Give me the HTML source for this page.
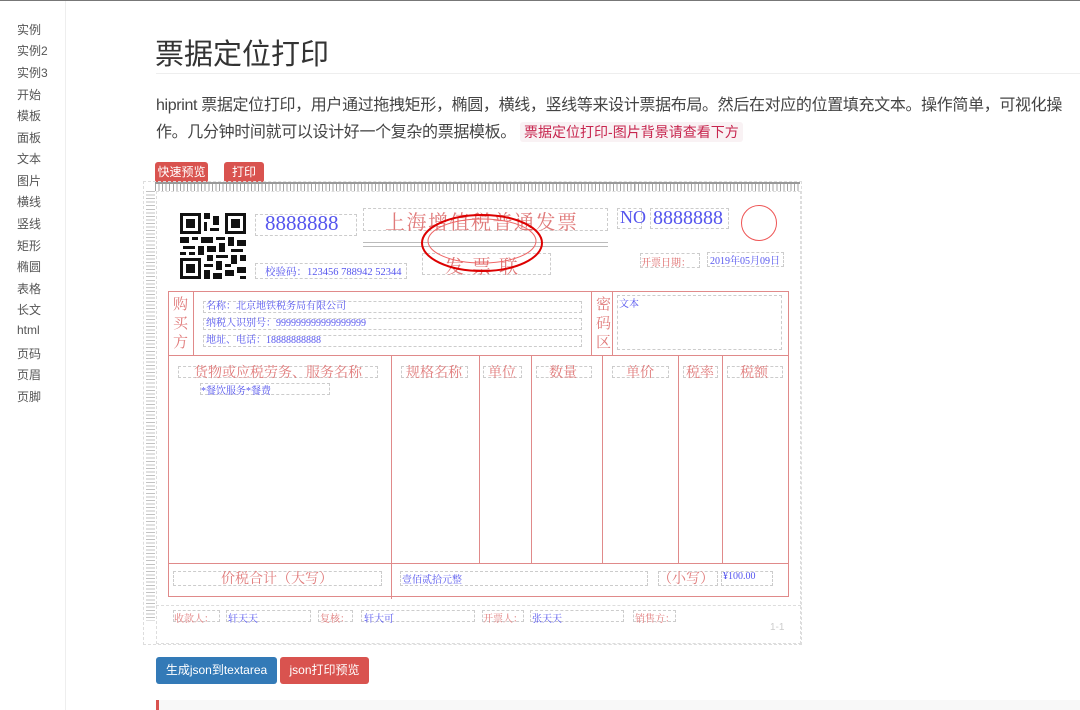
<!DOCTYPE html>
<html><head><meta charset="utf-8">
<style>
*{margin:0;padding:0;box-sizing:border-box}
body{width:1080px;height:709px;overflow:hidden;background:#fff;font-family:"Liberation Sans","Noto Sans CJK SC",sans-serif;position:relative;border-top:1px solid #777}
.a{position:absolute;white-space:nowrap}
.side{position:absolute;left:0;top:0;width:66px;height:709px;border-right:1px solid #eee}
.side div{position:absolute;left:17px;font-size:12px;color:#555}
.d{position:absolute;border:1px dashed #ccc}
.s{font-family:"Liberation Serif","Noto Serif CJK SC",serif}
.ln{position:absolute;background:#e08a8a}
</style></head><body>
<div class="side">
<div style="top:20px">实例</div><div style="top:41px">实例2</div><div style="top:63px">实例3</div><div style="top:85px">开始</div><div style="top:106px">模板</div><div style="top:128px">面板</div><div style="top:149px">文本</div><div style="top:171px">图片</div><div style="top:192px">横线</div><div style="top:214px">竖线</div><div style="top:236px">矩形</div><div style="top:257px">椭圆</div><div style="top:279px">表格</div><div style="top:300px">长文</div><div style="top:322px">html</div><div style="top:344px">页码</div><div style="top:365px">页眉</div><div style="top:387px">页脚</div>
</div>
<div class="a" style="left:155px;top:30px;font-size:29px;color:#333">票据定位打印</div>
<div class="a" style="left:156px;top:72px;width:924px;height:1px;background:#eee"></div>
<div class="a" style="left:156px;top:91px;font-size:16px;color:#444;line-height:27px;letter-spacing:-0.35px">hiprint 票据定位打印，用户通过拖拽矩形，椭圆，横线，竖线等来设计票据布局。然后在对应的位置填充文本。操作简单，可视化操<br>作。几分钟时间就可以设计好一个复杂的票据模板。 <span style="font-size:14px;color:#c7254e;background:#f9f2f4;padding:2px 4px;border-radius:3px;letter-spacing:0">票据定位打印-图片背景请查看下方</span></div>
<div class="a" style="left:155px;top:161px;width:53px;height:21px;background:#d9534f;border-radius:3px;color:#fff;font-size:12px;line-height:21px;text-align:center">快速预览</div>
<div class="a" style="left:224px;top:161px;width:40px;height:21px;background:#d9534f;border-radius:3px;color:#fff;font-size:12px;line-height:21px;text-align:center">打印</div>
<!-- paper -->
<div class="d" style="left:143px;top:180px;width:659px;height:464px;border-color:#ddd"></div>
<div class="a" style="left:155px;top:181px;width:645px;height:9px;background:repeating-linear-gradient(90deg,#666 0 1px,transparent 1px 3.55px);opacity:.6"></div>
<div class="a" style="left:155px;top:181px;width:645px;height:2px;background:#999"></div>
<div class="a" style="left:146px;top:190px;width:9px;height:430px;background:repeating-linear-gradient(180deg,#777 0 1px,transparent 1px 3.55px);opacity:.45"></div>
<div class="d" style="left:156px;top:190px;width:645px;height:453px;border-color:#ddd"></div>
<!-- QR -->
<svg class="a" style="left:180px;top:212px" width="66" height="66" viewBox="0 0 22 22">
<rect width="22" height="22" fill="#fff"/>
<g fill="#111"><path d="M0 0h7v7h-7zM15 0h7v7h-7zM0 15h7v7h-7z"/></g>
<g fill="#fff"><path d="M1 1h5v5h-5zM16 1h5v5h-5zM1 16h5v5h-5z"/></g>
<g fill="#111"><path d="M2 2h3v3h-3zM17 2h3v3h-3zM2 17h3v3h-3z"/>
<path d="M8 0h2v2h-2zM11 1h2v3h-2zM8 3h1v3h-1zM10 5h3v1h-3zM0 8h3v2h-3zM4 8h2v1h-2zM7 8h4v2h-4zM12 8h3v1h-3zM16 8h2v3h-2zM19 9h3v2h-3zM1 11h4v1h-4zM6 11h2v3h-2zM9 11h3v2h-3zM13 10h2v3h-2zM17 12h4v1h-4zM0 13h2v1h-2zM3 13h2v1h-2zM9 14h2v2h-2zM12 14h4v1h-4zM17 14h2v3h-2zM20 14h2v2h-2zM8 17h3v1h-3zM12 16h2v3h-2zM15 17h2v1h-2zM19 18h3v2h-3zM8 19h2v3h-2zM11 20h3v2h-3zM15 19h3v2h-3zM20 21h2v1h-2z"/></g>
</svg>
<div class="d" style="left:255px;top:213px;width:102px;height:22px"></div>
<div class="a s" style="left:265px;top:210px;font-size:21px;color:#55e">8888888</div>
<div class="d" style="left:363px;top:207px;width:245px;height:23px"></div>
<div class="a s" style="left:385px;top:205px;font-size:20px;color:#e07a7a;letter-spacing:1.5px">上海增值税普通发票</div>
<div class="a" style="left:363px;top:241px;width:245px;height:1px;background:#bbb"></div>
<div class="a" style="left:363px;top:245px;width:245px;height:1px;background:#bbb"></div>
<div class="d" style="left:422px;top:252px;width:129px;height:22px"></div>
<div class="a s" style="left:445px;top:251px;font-size:19px;color:#e07a7a;letter-spacing:8px">发票联</div>
<svg class="a" style="left:418px;top:207px" width="130" height="70"><ellipse cx="64" cy="35" rx="60" ry="28" fill="none" stroke="#d00" stroke-width="2"/><ellipse cx="64" cy="33" rx="54" ry="22" fill="none" stroke="#e66" stroke-width="1"/></svg>
<div class="d" style="left:617px;top:207px;width:25px;height:21px"></div>
<div class="a s" style="left:620px;top:206px;font-size:18px;color:#55e">NO</div>
<div class="d" style="left:650px;top:207px;width:79px;height:21px"></div>
<div class="a s" style="left:653px;top:206px;font-size:20px;color:#55e">8888888</div>
<svg class="a" style="left:740px;top:202px" width="40" height="40"><circle cx="19" cy="20" r="17.5" fill="none" stroke="#e55" stroke-width="1"/></svg>
<div class="d" style="left:640px;top:252px;width:60px;height:15px"></div>
<div class="a s" style="left:641px;top:253px;font-size:10px;color:#d66">开票日期：</div>
<div class="d" style="left:707px;top:251px;width:77px;height:15px"></div>
<div class="a s" style="left:710px;top:251px;font-size:10px;color:#55e">2019年05月09日</div>
<div class="d" style="left:255px;top:262px;width:152px;height:16px"></div>
<div class="a s" style="left:265px;top:263px;font-size:10.5px;color:#55e">校验码：123456 788942 52344</div>
<!-- frame -->
<div class="a" style="left:168px;top:290px;width:621px;height:306px;border:1px solid #e08a8a"></div>
<div class="ln" style="left:168px;top:354px;width:621px;height:1px"></div>
<div class="ln" style="left:168px;top:562px;width:621px;height:1px"></div>
<div class="ln" style="left:193px;top:290px;width:1px;height:64px"></div>
<div class="ln" style="left:591px;top:290px;width:1px;height:64px"></div>
<div class="ln" style="left:612px;top:290px;width:1px;height:64px"></div>
<div class="ln" style="left:391px;top:354px;width:1px;height:244px"></div>
<div class="ln" style="left:479px;top:354px;width:1px;height:208px"></div>
<div class="ln" style="left:531px;top:354px;width:1px;height:208px"></div>
<div class="ln" style="left:602px;top:354px;width:1px;height:208px"></div>
<div class="ln" style="left:678px;top:354px;width:1px;height:208px"></div>
<div class="ln" style="left:722px;top:354px;width:1px;height:208px"></div>
<div class="a s" style="left:173px;top:295px;font-size:15px;color:#e07a7a;line-height:19px;white-space:normal;width:16px">购买方</div>
<div class="a s" style="left:596px;top:295px;font-size:15px;color:#e07a7a;line-height:19px;white-space:normal;width:16px">密码区</div>
<div class="d" style="left:617px;top:294px;width:165px;height:55px"></div>
<div class="a s" style="left:619px;top:294px;font-size:10px;color:#55e">文本</div>
<div class="d" style="left:203px;top:300px;width:379px;height:12px"></div>
<div class="d" style="left:203px;top:317px;width:379px;height:12px"></div>
<div class="d" style="left:203px;top:334px;width:379px;height:12px"></div>
<div class="a s" style="left:206px;top:300px;font-size:10px;color:#55e;line-height:12px">名称：北京地铁税务局有限公司</div>
<div class="a s" style="left:206px;top:317px;font-size:10px;color:#55e;line-height:12px">纳税人识别号：999999999999999999</div>
<div class="a s" style="left:206px;top:334px;font-size:10px;color:#55e;line-height:12px">地址、电话：18888888888</div>
<!-- headers -->
<div class="d" style="left:178px;top:365px;width:200px;height:12px"></div>
<div class="a s" style="left:194px;top:361px;font-size:14px;color:#e07a7a">货物或应税劳务、服务名称</div>
<div class="d" style="left:401px;top:365px;width:67px;height:12px"></div>
<div class="a s" style="left:406px;top:361px;font-size:14px;color:#e07a7a">规格名称</div>
<div class="d" style="left:483px;top:365px;width:39px;height:12px"></div>
<div class="a s" style="left:488px;top:361px;font-size:14px;color:#e07a7a">单位</div>
<div class="d" style="left:536px;top:365px;width:56px;height:12px"></div>
<div class="a s" style="left:549px;top:361px;font-size:14px;color:#e07a7a">数量</div>
<div class="d" style="left:612px;top:365px;width:57px;height:12px"></div>
<div class="a s" style="left:626px;top:361px;font-size:14px;color:#e07a7a">单价</div>
<div class="d" style="left:683px;top:365px;width:35px;height:12px"></div>
<div class="a s" style="left:686px;top:361px;font-size:14px;color:#e07a7a">税率</div>
<div class="d" style="left:727px;top:365px;width:56px;height:12px"></div>
<div class="a s" style="left:740px;top:361px;font-size:14px;color:#e07a7a">税额</div>
<div class="d" style="left:200px;top:382px;width:130px;height:12px"></div>
<div class="a s" style="left:201px;top:381px;font-size:10px;color:#55e">*餐饮服务*餐费</div>
<!-- total row -->
<div class="d" style="left:173px;top:570px;width:209px;height:15px"></div>
<div class="a s" style="left:221px;top:567px;font-size:14px;color:#e07a7a">价税合计（大写）</div>
<div class="d" style="left:400px;top:570px;width:248px;height:15px"></div>
<div class="a s" style="left:402px;top:570px;font-size:10px;color:#55e">壹佰贰拾元整</div>
<div class="d" style="left:658px;top:570px;width:60px;height:15px"></div>
<div class="a s" style="left:658px;top:567px;font-size:14px;color:#e07a7a">（小写）</div>
<div class="d" style="left:721px;top:570px;width:52px;height:15px"></div>
<div class="a s" style="left:723px;top:570px;font-size:10px;color:#55e">¥100.00</div>
<!-- footer -->
<div class="d" style="left:156px;top:604px;width:645px;height:1px;border-width:1px 0 0 0;border-color:#ddd"></div>
<div class="d" style="left:173px;top:609px;width:47px;height:12px"></div>
<div class="a s" style="left:174px;top:609px;font-size:10px;color:#e07a7a">收款人：</div>
<div class="d" style="left:226px;top:609px;width:85px;height:12px"></div>
<div class="a s" style="left:228px;top:609px;font-size:10px;color:#55e">轩天天</div>
<div class="d" style="left:318px;top:609px;width:35px;height:12px"></div>
<div class="a s" style="left:320px;top:609px;font-size:10px;color:#e07a7a">复核：</div>
<div class="d" style="left:361px;top:609px;width:114px;height:12px"></div>
<div class="a s" style="left:364px;top:609px;font-size:10px;color:#55e">轩大可</div>
<div class="d" style="left:482px;top:609px;width:42px;height:12px"></div>
<div class="a s" style="left:483px;top:609px;font-size:10px;color:#e07a7a">开票人：</div>
<div class="d" style="left:530px;top:609px;width:94px;height:12px"></div>
<div class="a s" style="left:532px;top:609px;font-size:10px;color:#55e">张天天</div>
<div class="d" style="left:633px;top:609px;width:43px;height:12px"></div>
<div class="a s" style="left:635px;top:609px;font-size:10px;color:#e07a7a">销售方：</div>
<div class="a" style="left:770px;top:621px;font-size:10px;color:#ccc">1-1</div>
<!-- buttons -->
<div class="a" style="left:156px;top:656px;width:121px;height:27px;background:#337ab7;border-radius:3px;color:#fff;font-size:12px;line-height:27px;text-align:center">生成json到textarea</div>
<div class="a" style="left:280px;top:656px;width:89px;height:27px;background:#d9534f;border-radius:3px;color:#fff;font-size:12px;line-height:27px;text-align:center">json打印预览</div>
<div class="a" style="left:156px;top:699px;width:924px;height:10px;background:#f8f8f8;border-left:3px solid #d9534f"></div>
</body></html>
